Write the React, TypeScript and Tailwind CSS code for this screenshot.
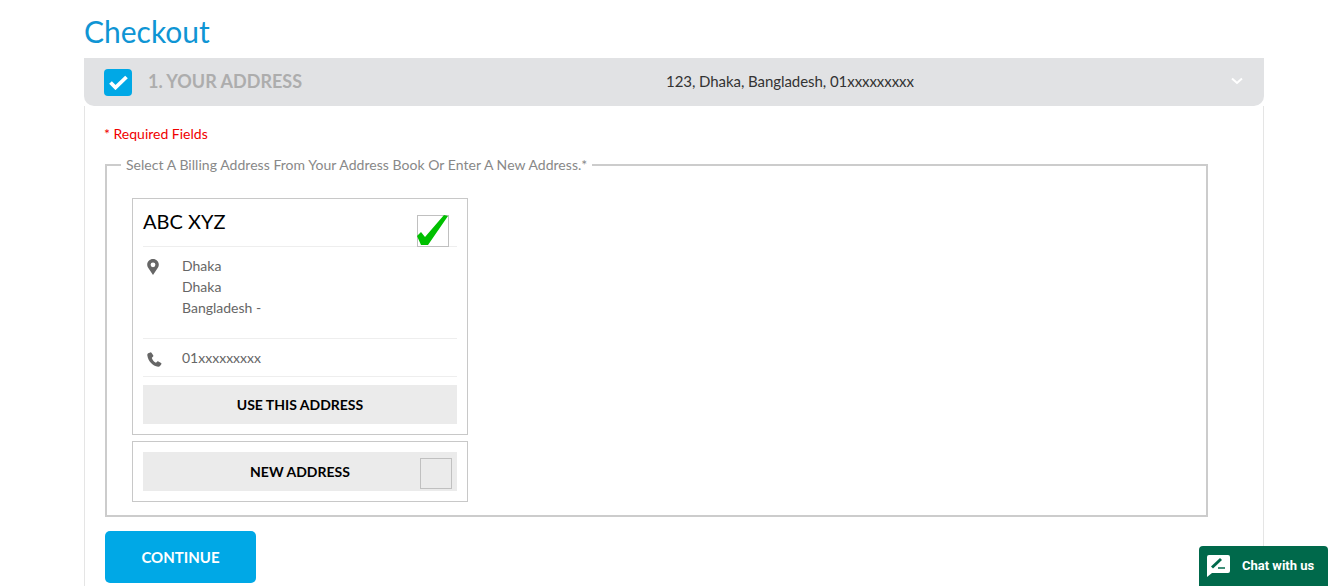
import React from 'react';

const lato = { fontFamily: 'Lato, sans-serif' };

const PinIcon = () => (
  <svg width="12" height="16" viewBox="0 0 12 16" className="block">
    <path
      fill="#666"
      fillRule="evenodd"
      d="M6 0C2.700 0 .2 2.500.2 5.700c0 1.100.3 1.900.8 2.800L6 16l5-7.500c.5-.9.8-1.700.8-2.800C11.800 2.500 9.300 0 6 0zm0 3.400a2.400 2.400 0 1 1 0 4.800 2.400 2.400 0 0 1 0-4.800z"
    />
  </svg>
);

const PhoneIcon = () => (
  <svg width="15" height="15" viewBox="0 0 15 15" className="block">
    <path
      fill="#666"
      d="M3.300.4 1.200 1.300C.5 1.700.2 2.400.3 3.200c.5 3 1.700 5.500 3.500 7.600 2 2.200 4.500 3.500 7.300 3.900.8.100 1.500-.2 1.900-.8l1.300-1.700c.3-.4.2-.9-.2-1.200L11.400 9.400c-.4-.2-.8-.2-1.100.1l-1 1c-.3.200-.6.200-.9 0C6.800 9.400 5.600 8 4.900 6.200c-.1-.3 0-.6.200-.8l1-.9c.3-.3.400-.7.200-1.100L4.500.8C4.200.4 3.700.2 3.300.4z"
    />
  </svg>
);

const App: React.FC = () => {
  return (
    <div className="h-[586px] overflow-hidden bg-white relative" style={lato}>
      <div className="w-[1180px] ml-[84px]">
        <h1 className="h-[58px] pt-[10px] text-[30px] leading-[42px] text-[#0f95d4] font-normal">Checkout</h1>

        {/* step header */}
        <div className="h-[48px] bg-[#e1e2e4] rounded-b-[10px] flex items-center pl-[20px] relative">
          <div className="w-[28px] h-[27px] rounded-[4px] bg-[#00a8e6] flex items-center justify-center">
            <svg width="19" height="15" viewBox="0 0 19 15">
              <path d="M1.500 7.500l5 5 11-10.500" fill="none" stroke="#fff" strokeWidth="3.800" />
            </svg>
          </div>
          <span className="ml-[16px] mb-[2px] text-[18px] font-bold text-[#adadad]">1. YOUR ADDRESS</span>
          <span className="absolute left-[582px] top-[13px] text-[15px] leading-[20px] text-[#333] tracking-[-0.06px]">
            123, Dhaka, Bangladesh, 01xxxxxxxxx
          </span>
          <svg width="12" height="8" viewBox="0 0 12 8" className="absolute right-[21px] top-[19px]">
            <path d="M1 1.500l5 4.500 5-4.500" fill="none" stroke="#fff" strokeWidth="2" />
          </svg>
        </div>

        {/* step body */}
        <div className="h-[480px] border-x border-[#e5e5e5] pl-[20px] pr-[55px]">
          <p className="pt-[19px] -ml-[1px] text-[14px] leading-[18px] text-[#f00000]">* Required Fields</p>

          <fieldset className="mt-[13px] h-[361px] border-2 border-[#cccccc]">
            <legend className="ml-[14px] px-[5px] text-[14px] leading-[18px] text-[#888] tracking-[0.04px]">
              Select A Billing Address From Your Address Book Or Enter A New Address.*
            </legend>

            {/* saved address */}
            <div className="ml-[25px] mt-[24px] w-[336px] h-[237px] border border-[#c8c8c8] px-[10px]">
              <div className="h-[48px] border-b border-[#eeeeee] relative">
                <span className="block pt-[8px] text-[20px] leading-[28px] text-black">ABC XYZ</span>
                <div className="absolute right-[8px] top-[16px] w-[32px] h-[32px] border border-[#c0c0c0]">
                  <svg width="32" height="31" viewBox="0 0 32 31" className="absolute left-[-1px] top-[-1px]">
                    <path d="M0 21l4-4 4 5L27 0l4 1-20 29H4z" fill="#00c000" />
                  </svg>
                </div>
              </div>
              <div className="h-[92px] border-b border-[#eeeeee] flex pt-[8px]">
                <div className="w-[39px] pl-[4px] pt-[4px]">
                  <PinIcon />
                </div>
                <div className="text-[14px] leading-[21px] text-[#666]">
                  <div>Dhaka</div>
                  <div>Dhaka</div>
                  <div>Bangladesh -</div>
                </div>
              </div>
              <div className="h-[38px] border-b border-[#eeeeee] flex items-center">
                <div className="w-[39px] pl-[4px] pt-[3px]">
                  <PhoneIcon />
                </div>
                <span className="text-[14px] text-[#666]">01xxxxxxxxx</span>
              </div>
              <button className="mt-[8px] w-full h-[39px] bg-[#ebebeb] text-[14px] font-bold text-black">
                USE THIS ADDRESS
              </button>
            </div>

            {/* new address */}
            <div className="ml-[25px] mt-[6px] w-[336px] h-[61px] border border-[#c8c8c8] px-[10px] pt-[10px]">
              <div className="h-[39px] bg-[#ebebeb] relative flex items-center justify-center text-[14px] font-bold text-black">
                NEW ADDRESS
                <div className="absolute right-[5px] top-[6px] w-[32px] h-[31px] border border-[#c0c0c0]" />
              </div>
            </div>
          </fieldset>

          <button className="mt-[14px] w-[151px] h-[52px] rounded-[5px] bg-[#00a8e6] text-white text-[15px] font-bold">
            CONTINUE
          </button>
        </div>
      </div>

      {/* chat widget */}
      <div className="absolute left-[1199px] top-[546px] w-[129px] h-[40px] rounded-t-[4px] bg-[#00694b] flex items-center pl-[8px]">
        <svg width="23" height="22" viewBox="0 0 23 22">
          <path d="M2 0h19a2 2 0 0 1 2 2v14a2 2 0 0 1-2 2H5l-5 4V2a2 2 0 0 1 2-2z" fill="#fff" />
          <path d="M5 12.500l9-8.500" stroke="#00694b" strokeWidth="3" fill="none" />
          <path d="M11 13h7" stroke="#00694b" strokeWidth="1.500" />
        </svg>
        <span className="ml-[12px] text-[13px] font-bold text-white font-['Roboto']">Chat with us</span>
      </div>
    </div>
  );
};

export default App;
